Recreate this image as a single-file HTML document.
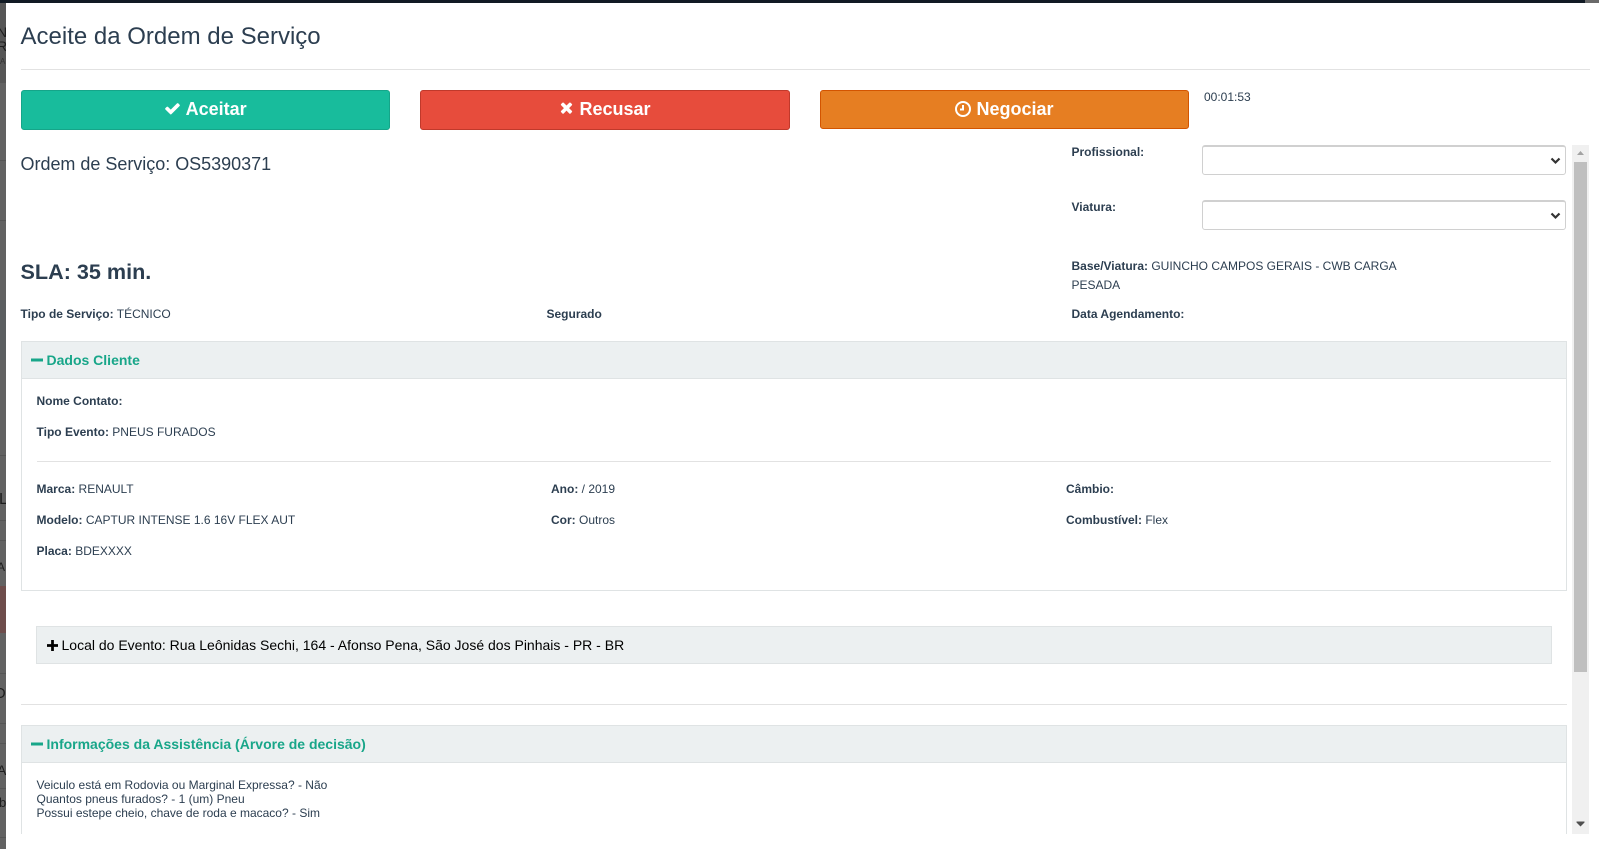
<!DOCTYPE html>
<html lang="pt-BR">
<head>
<meta charset="utf-8">
<title>Aceite da Ordem de Serviço</title>
<style>
html,body{margin:0;padding:0;width:1599px;height:849px;overflow:hidden;background:#fff;}
body{font-family:"Liberation Sans",Arial,sans-serif;font-size:12px;color:#2c3e50;position:relative;}
.a{position:absolute;white-space:nowrap;}
.t{line-height:20px;height:20px;}
b{font-weight:700;}
.btn{position:absolute;box-sizing:border-box;border-radius:3px;color:#fff;font-weight:700;font-size:18px;text-align:center;line-height:37px;border-style:solid;border-width:1px;}
.btn svg{vertical-align:-2px;fill:#fff;}
.sel{position:absolute;box-sizing:border-box;left:1202px;width:364px;height:30px;background:#fff;border:1px solid #d0d0d0;border-top:2px solid #d0d0d0;border-radius:3px;}
.sel svg{position:absolute;right:4px;top:10px;}
.ph{position:absolute;box-sizing:border-box;left:21px;width:1546px;height:38px;background:#ecf0f1;border:1px solid #dfe3e4;color:#18a689;font-weight:700;font-size:14px;line-height:36px;}
.ph svg{position:absolute;left:9px;top:13px;fill:#18a689;}
.ph span{position:absolute;left:24.5px;top:0;}
.line{position:absolute;background:#e2e2e2;height:1px;}
</style>
</head>
<body>
<!-- backdrop strip -->
<div class="a" style="left:0;top:0;width:6px;height:849px;background:#626262;overflow:hidden;">
  <div class="a" style="left:0;top:3px;width:6px;height:80px;background:#565656;"></div>
  <div class="a" style="left:0;top:160px;width:6px;height:1px;background:#555;"></div>
  <div class="a" style="left:0;top:220px;width:6px;height:1px;background:#555;"></div>
  <div class="a" style="left:0;top:300px;width:6px;height:60px;background:#5b5e60;"></div>
  <div class="a" style="left:0;top:455px;width:6px;height:1px;background:#555;"></div>
  <div class="a" style="left:0;top:520px;width:6px;height:1px;background:#555;"></div>
  <div class="a" style="left:0;top:540px;width:6px;height:1px;background:#555;"></div>
  <div class="a" style="left:0;top:586px;width:6px;height:47px;background:#6e4d4c;"></div>
  <div class="a" style="left:0;top:673px;width:6px;height:1px;background:#555;"></div>
  <div class="a" style="left:0;top:723px;width:6px;height:1px;background:#555;"></div>
  <div class="a" style="left:0;top:743px;width:6px;height:1px;background:#555;"></div>
  <div class="a" style="left:0;top:788px;width:6px;height:1px;background:#555;"></div>
  <div class="a" style="left:0;top:837px;width:6px;height:1px;background:#555;"></div>
  <div class="a" style="left:-3px;top:24px;font-size:14px;line-height:16px;color:#1d1d1d;">N</div>
  <div class="a" style="left:-3px;top:38px;font-size:14px;line-height:16px;color:#1d1d1d;">RA</div>
  <div class="a" style="left:0;top:57px;font-size:8px;line-height:10px;color:#333;">A</div>
  <div class="a" style="left:-1px;top:491px;font-size:16px;line-height:18px;color:#1d1d1d;">L</div>
  <div class="a" style="left:-3px;top:560px;font-size:12px;line-height:14px;color:#1d1d1d;">A</div>
  <div class="a" style="left:-6px;top:685px;font-size:15px;line-height:17px;color:#1d1d1d;">O</div>
  <div class="a" style="left:-3px;top:762px;font-size:14px;line-height:16px;color:#1d1d1d;">A</div>
  <div class="a" style="left:-1px;top:795px;font-size:13px;line-height:15px;color:#1d1d1d;">b</div>
</div>
<!-- top band -->
<div class="a" style="left:0;top:0;width:1585px;height:3px;background:#111a24;"></div>
<div class="a" style="left:1585px;top:0;width:14px;height:3px;background:#6a6a6a;"></div>
<!-- modal -->
<div class="a" style="left:6px;top:3px;width:1593px;height:846px;background:#fff;border-radius:6px 0 0 6px;"></div>

<div class="a" style="left:20.5px;top:21px;font-size:24px;line-height:32px;">Aceite da Ordem de Serviço</div>
<div class="line" style="left:21px;top:69px;width:1569px;"></div>

<div class="btn" style="left:21px;top:90px;width:369px;height:40px;background:#18bc9c;border-color:#15a589;">
  <svg width="17" height="17" viewBox="0 0 1792 1792"><path d="M1671 566q0 40-28 68l-724 724-136 136q-28 28-68 28t-68-28l-136-136-362-362q-28-28-28-68t28-68l136-136q28-28 68-28t68 28l294 295 656-657q28-28 68-28t68 28l136 136q28 28 28 68z"/></svg> Aceitar
</div>
<div class="btn" style="left:420px;top:90px;width:370px;height:40px;background:#e74c3c;border-color:#c0392b;">
  <svg width="15" height="17" viewBox="0 0 1408 1792"><path d="M1298 1214q0 40-28 68l-136 136q-28 28-68 28t-68-28l-294-294-294 294q-28 28-68 28t-68-28l-136-136q-28-28-28-68t28-68l294-294-294-294q-28-28-28-68t28-68l136-136q28-28 68-28t68 28l294 294 294-294q28-28 68-28t68 28l136 136q28 28 28 68t-28 68l-294 294 294 294q28 28 28 68z"/></svg> Recusar
</div>
<div class="btn" style="left:820px;top:90px;width:369px;height:39px;background:#e67e22;border-color:#d35400;line-height:36px;">
  <svg width="16" height="16" viewBox="0 0 16 16" style="vertical-align:-2px"><path fill-rule="evenodd" d="M8 0a8 8 0 1 1 0 16A8 8 0 0 1 8 0zm0 2a6 6 0 1 0 0 12A6 6 0 0 0 8 2zM7 4h2v5.500H5v-2h2z"/></svg> Negociar
</div>
<div class="a t" style="left:1204px;top:87px;">00:01:53</div>

<div class="a" style="left:20.5px;top:152px;font-size:18px;line-height:24px;letter-spacing:-0.02px;">Ordem de Serviço: OS5390371</div>
<div class="a t" style="left:1071.500px;top:142px;"><b>Profissional:</b></div>
<div class="a t" style="left:1071.500px;top:197px;"><b>Viatura:</b></div>
<div class="sel" style="top:145px;"><svg width="11" height="8" viewBox="0 0 11 8"><path d="M1.500 1.500L5.500 5.500L9.500 1.500" fill="none" stroke="#333" stroke-width="2.200"/></svg></div>
<div class="sel" style="top:200px;"><svg width="11" height="8" viewBox="0 0 11 8"><path d="M1.500 1.500L5.500 5.500L9.500 1.500" fill="none" stroke="#333" stroke-width="2.200"/></svg></div>

<div class="a" style="left:20.5px;top:258px;font-size:21.6px;line-height:28px;font-weight:700;">SLA: 35 min.</div>
<div class="a t" style="left:1071.500px;top:256px;"><b>Base/Viatura:</b> GUINCHO CAMPOS GERAIS - CWB CARGA</div>
<div class="a t" style="left:1071.500px;top:275px;">PESADA</div>

<div class="a t" style="left:20.5px;top:304px;"><b>Tipo de Serviço:</b> TÉCNICO</div>
<div class="a t" style="left:546.500px;top:304px;"><b>Segurado</b></div>
<div class="a t" style="left:1071.500px;top:304px;"><b>Data Agendamento:</b></div>

<!-- Dados Cliente -->
<div class="a" style="left:21px;top:341px;width:1546px;height:250px;box-sizing:border-box;border:1px solid #dfe3e4;"></div>
<div class="ph" style="top:341px;"><svg width="12" height="12" viewBox="0 0 12 12"><rect x="0" y="3.500" width="12" height="3"/></svg><span>Dados Cliente</span></div>
<div class="a t" style="left:36.500px;top:391px;"><b>Nome Contato:</b></div>
<div class="a t" style="left:36.500px;top:422px;"><b>Tipo Evento:</b> PNEUS FURADOS</div>
<div class="line" style="left:37px;top:461px;width:1514px;"></div>
<div class="a t" style="left:36.500px;top:479px;"><b>Marca:</b> RENAULT</div>
<div class="a t" style="left:551px;top:479px;"><b>Ano:</b> / 2019</div>
<div class="a t" style="left:1066px;top:479px;"><b>Câmbio:</b></div>
<div class="a t" style="left:36.500px;top:510px;"><b>Modelo:</b> CAPTUR INTENSE 1.6 16V FLEX AUT</div>
<div class="a t" style="left:551px;top:510px;"><b>Cor:</b> Outros</div>
<div class="a t" style="left:1066px;top:510px;"><b>Combustível:</b> Flex</div>
<div class="a t" style="left:36.500px;top:541px;"><b>Placa:</b> BDEXXXX</div>

<!-- Local -->
<div class="ph" style="left:36px;top:626px;width:1516px;color:#000;font-weight:400;">
  <svg width="11" height="11" viewBox="0 0 12 12" style="fill:#000;left:10px;top:13px;"><path d="M4.500 0h3v4.500H12v3H7.500V12h-3V7.500H0v-3h4.500z"/></svg><span style="left:24.5px;">Local do Evento: Rua Leônidas Sechi, 164 - Afonso Pena, São José dos Pinhais - PR - BR</span>
</div>

<div class="line" style="left:21px;top:704px;width:1546px;"></div>

<!-- Informações -->
<div class="a" style="left:21px;top:725px;width:1546px;height:109px;box-sizing:border-box;border:1px solid #dfe3e4;border-bottom:0;"></div>
<div class="ph" style="top:725px;"><svg width="12" height="12" viewBox="0 0 12 12"><rect x="0" y="3.500" width="12" height="3"/></svg><span>Informações da Assistência (Árvore de decisão)</span></div>
<div class="a" style="left:36.500px;top:778px;line-height:14px;">Veiculo está em Rodovia ou Marginal Expressa? - Não<br>Quantos pneus furados? - 1 (um) Pneu<br>Possui estepe cheio, chave de roda e macaco? - Sim</div>

<!-- scrollbar -->
<div class="a" style="left:1572px;top:145px;width:17px;height:689px;background:#f0f0f0;"></div>
<div class="a" style="left:1574px;top:162px;width:13px;height:510px;background:#bfbfbf;"></div>
<svg class="a" style="left:1576px;top:150px;" width="9" height="6" viewBox="0 0 9 6"><path d="M4.500 1L8 5H1z" fill="#a3a3a3"/></svg>
<svg class="a" style="left:1576px;top:821px;" width="9" height="6" viewBox="0 0 9 6"><path d="M0.500 0.500h8v1L4.500 5.500 0.500 1.500z" fill="#505050"/></svg>
</body>
</html>
